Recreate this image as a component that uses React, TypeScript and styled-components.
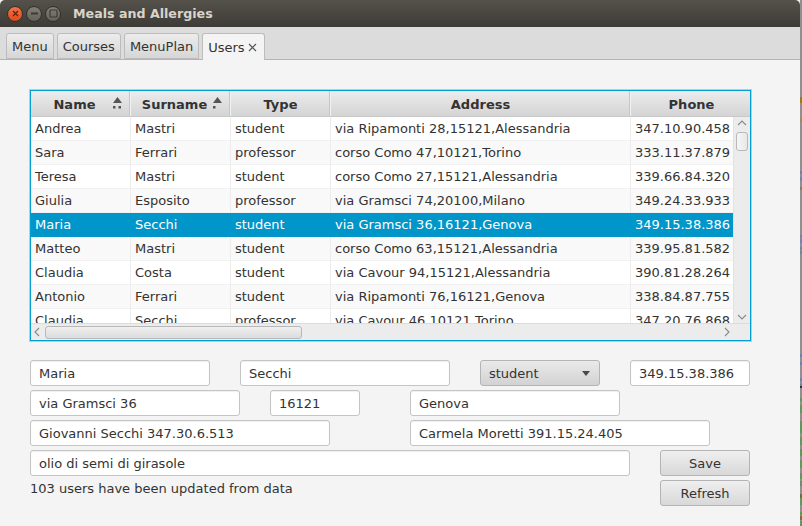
import React from 'react'
import styled, { createGlobalStyle } from 'styled-components'

const GlobalStyle = createGlobalStyle`
  html, body {
    margin: 0;
    padding: 0;
    background: #8f8f8f;
  }
  * {
    box-sizing: border-box;
  }
`

const Desktop = styled.div`
  width: 802px;
  height: 526px;
  display: flex;
  overflow: hidden;
`

const Window = styled.div`
  flex: none;
  width: 800px;
  height: 526px;
  overflow: hidden;
  background: #f4f4f4;
  font-family: 'DejaVu Sans', sans-serif;
  font-size: 13px;
  color: #333;
`

const EdgeStrip = styled.svg`
  flex: none;
  display: block;
`

const TitleBar = styled.div`
  height: 27px;
  display: flex;
  align-items: center;
  padding-left: 7px;
  background: linear-gradient(#55524b, #3d3b36);
  border-radius: 5px 5px 0 0;
`

const WinButtons = styled.div`
  display: flex;
  gap: 3px;
`

const WinButton = styled.div<{ $kind: 'close' | 'other' }>`
  width: 16px;
  height: 16px;
  border-radius: 50%;
  display: flex;
  align-items: center;
  justify-content: center;
  border: 1px solid #33312c;
  background: ${p => (p.$kind === 'close' ? 'linear-gradient(#f0734a, #dd4a1c)' : 'linear-gradient(#817e76, #65625b)')};
`

const Title = styled.div`
  margin-left: 12px;
  font-weight: bold;
  font-size: 12.65px;
  color: #d8d4ca;
`

const TabBar = styled.div`
  height: 33px;
  display: flex;
  align-items: flex-end;
  gap: 3px;
  padding-left: 6px;
  background: #dcdcdc;
  border-bottom: 1px solid #b4b4b4;
`

const Tab = styled.div<{ $active?: boolean }>`
  height: ${p => (p.$active ? '27px' : '26px')};
  margin-bottom: ${p => (p.$active ? '-1px' : '0')};
  display: flex;
  align-items: center;
  gap: 3px;
  padding: ${p => (p.$active ? '0 7px 0 5px' : '0 5px')};
  border: 1px solid #bcbcbc;
  border-bottom: ${p => (p.$active ? 'none' : '1px solid #bcbcbc')};
  border-radius: 3px 3px 0 0;
  background: ${p => (p.$active ? '#f4f4f4' : 'linear-gradient(#ececec, #d6d6d6)')};
`

const Content = styled.div`
  padding: 30px 0 0 30px;
`

const TableFrame = styled.div`
  width: 721px;
  height: 251px;
  border: 1px solid #039ed3;
  box-shadow: 0 0 0 1px rgba(3, 158, 211, 0.35), inset 0 0 0 0.5px #39b3dd;
  background: #fff;
  display: flex;
  flex-direction: column;
  overflow: hidden;
`

const HeaderRow = styled.div`
  flex: none;
  height: 26px;
  display: flex;
  background: linear-gradient(#ececec, #d4d4d4);
  border-bottom: 1px solid #c8c8c8;
`

const HeaderCell = styled.div<{ $w: number; $shift: number }>`
  flex: none;
  position: relative;
  width: ${p => p.$w}px;
  padding: 2px ${p => p.$shift}px 0 0;
  display: flex;
  align-items: center;
  justify-content: center;
  font-weight: bold;
  color: #333;
  border-right: 1px solid #f2f2f2;
  box-shadow: inset -1px 0 0 #c6c6c6;
`

const SortMark = styled.svg`
  position: absolute;
  top: 5px;
  left: 81px;
`

const BodyArea = styled.div`
  flex: 1;
  min-height: 0;
  display: flex;
`

const Rows = styled.div`
  flex: 1;
  min-width: 0;
  overflow: hidden;
`

const Row = styled.div<{ $odd: boolean; $selected: boolean }>`
  height: 24px;
  display: flex;
  align-items: center;
  background: ${p => (p.$selected ? '#0096c9' : p.$odd ? '#f9f9f9' : '#fff')};
  color: ${p => (p.$selected ? '#fff' : '#333')};
  border-bottom: 1px solid ${p => (p.$selected ? '#0096c9' : '#f1f1f1')};
`

const Cell = styled.div<{ $w: number; $selected: boolean }>`
  flex: none;
  width: ${p => p.$w}px;
  height: 24px;
  line-height: 23px;
  padding-left: 4px;
  white-space: nowrap;
  overflow: hidden;
  border-right: 1px solid ${p => (p.$selected ? '#0096c9' : '#ececec')};
`

const VScroll = styled.div`
  flex: none;
  width: 17px;
  background: #ececec;
  border-left: 1px solid #e2e2e2;
  display: flex;
  flex-direction: column;
  align-items: center;
`

const VThumb = styled.div`
  width: 12px;
  height: 19px;
  margin-top: 6px;
  border: 1px solid #b8b8b8;
  border-radius: 3px;
  background: linear-gradient(90deg, #f6f6f6, #e8e8e8);
`

const Arrow = styled.svg`
  flex: none;
  display: block;
`

const VArrowTop = styled(Arrow)`
  margin-top: 3px;
`

const VArrowBottom = styled(Arrow)`
  margin-top: auto;
  margin-bottom: 3px;
`

const HScroll = styled.div`
  flex: none;
  height: 17px;
  display: flex;
  align-items: center;
  background: #ececec;
  border-top: 1px solid #dcdcdc;
  padding: 0 20px 0 3px;
`

const HThumb = styled.div`
  width: 257px;
  height: 13px;
  margin-left: 5px;
  border: 1px solid #b8b8b8;
  border-radius: 3px;
  background: linear-gradient(#f0f0f0, #dcdcdc);
`

const HArrowRight = styled(Arrow)`
  margin-left: auto;
`

const Form = styled.div`
  margin-top: 19px;
  display: flex;
  flex-direction: column;
  gap: 4px;
`

const FormRow = styled.div`
  height: 26px;
  display: flex;
  align-items: flex-start;
`

const Field = styled.div<{ $w: number; $gap?: number }>`
  flex: none;
  width: ${p => p.$w}px;
  height: 26px;
  margin-left: ${p => p.$gap ?? 0}px;
  padding-left: 8px;
  line-height: 25px;
  white-space: nowrap;
  background: #fff;
  border: 1px solid #c4c4c4;
  border-radius: 3px;
  box-shadow: inset 0 1px 1px #f0f0f0;
`

const Combo = styled.div<{ $gap: number }>`
  flex: none;
  width: 120px;
  height: 26px;
  margin-left: ${p => p.$gap}px;
  padding: 0 9px 0 8px;
  display: flex;
  align-items: center;
  justify-content: space-between;
  border: 1px solid #b4b4b4;
  border-radius: 3px;
  background: linear-gradient(#eaeaea, #d2d2d2);
`

const ComboArrow = styled.div`
  width: 0;
  height: 0;
  border-left: 4px solid transparent;
  border-right: 4px solid transparent;
  border-top: 5px solid #4a4a4a;
`

const Button = styled.div<{ $gap: number }>`
  flex: none;
  width: 90px;
  height: 26px;
  margin-left: ${p => p.$gap}px;
  display: flex;
  align-items: center;
  justify-content: center;
  border: 1px solid #b4b4b4;
  border-radius: 3px;
  background: linear-gradient(#efefef, #d8d8d8);
`

const Status = styled.div`
  flex: none;
  width: 630px;
  line-height: 17px;
`

const columns = [
  { key: 'name', title: 'Name', width: 100, headWidth: 100, shift: 12 },
  { key: 'surname', title: 'Surname', width: 100, headWidth: 100, shift: 12 },
  { key: 'type', title: 'Type', width: 100, headWidth: 100, shift: 0 },
  { key: 'address', title: 'Address', width: 300, headWidth: 300, shift: 0 },
  { key: 'phone', title: 'Phone', width: 119, headWidth: 122, shift: 0 },
] as const

const users = [
  ['Andrea', 'Mastri', 'student', 'via Ripamonti 28,15121,Alessandria', '347.10.90.458'],
  ['Sara', 'Ferrari', 'professor', 'corso Como 47,10121,Torino', '333.11.37.879'],
  ['Teresa', 'Mastri', 'student', 'corso Como 27,15121,Alessandria', '339.66.84.320'],
  ['Giulia', 'Esposito', 'professor', 'via Gramsci 74,20100,Milano', '349.24.33.933'],
  ['Maria', 'Secchi', 'student', 'via Gramsci 36,16121,Genova', '349.15.38.386'],
  ['Matteo', 'Mastri', 'student', 'corso Como 63,15121,Alessandria', '339.95.81.582'],
  ['Claudia', 'Costa', 'student', 'via Cavour 94,15121,Alessandria', '390.81.28.264'],
  ['Antonio', 'Ferrari', 'student', 'via Ripamonti 76,16121,Genova', '338.84.87.755'],
  ['Claudia', 'Secchi', 'professor', 'via Cavour 46,10121,Torino', '347.20.76.868'],
]

const SELECTED = 4

// bits of the desktop showing past the window's right edge: [y, height, colour]
const edgeMarks: [number, number, string][] = [
  [97, 6, '#a07a10'],
  [119, 3, '#b08a20'],
  [171, 3, '#6a85b0'],
  [177, 4, '#6a85b0'],
  [187, 3, '#85805a'],
  [235, 3, '#6a85b0'],
  [239, 4, '#6a85b0'],
  [247, 3, '#6a85b0'],
  [251, 3, '#6a85b0'],
  [354, 3, '#6a85b0'],
  [362, 3, '#6a85b0'],
  [378, 3, '#6a85b0'],
  [384, 3, '#6a85b0'],
  [386, 2, '#333333'],
  [398, 3, '#5a9a5a'],
  [405, 8, '#5a9a5a'],
  [421, 12, '#5a9a5a'],
  [437, 8, '#5a9a5a'],
  [449, 7, '#5a9a5a'],
  [460, 8, '#5a9a5a'],
  [473, 6, '#5a9a5a'],
  [481, 5, '#5a9a5a'],
  [494, 4, '#7a6a40'],
  [498, 7, '#5a9a5a'],
  [512, 3, '#5a9a5a'],
  [516, 4, '#8a6a30'],
  [521, 5, '#5a9a5a'],
]

const Triangle = ({ dots }: { dots: number }) => (
  <SortMark width="11" height="13" viewBox="0 0 11 13">
    <path d="M5.5 1 L10 7 H1 Z" fill="#555" />
    <rect x="1" y="10" width="2.5" height="2.5" fill="#555" />
    {dots === 2 && <rect x="6.5" y="10" width="2.5" height="2.5" fill="#555" />}
  </SortMark>
)

const App = () => {
  return (
    <Desktop>
      <GlobalStyle />
      <Window>
        <TitleBar>
          <WinButtons>
            <WinButton $kind="close">
              <svg width="7" height="7" viewBox="0 0 7 7">
                <path d="M1 1 L6 6 M6 1 L1 6" stroke="#6b1f08" strokeWidth="1.3" />
              </svg>
            </WinButton>
            <WinButton $kind="other">
              <svg width="9" height="3" viewBox="0 0 9 3">
                <rect x="1" y="0.5" width="7" height="2" fill="#3c3a35" />
              </svg>
            </WinButton>
            <WinButton $kind="other">
              <svg width="9" height="9" viewBox="0 0 9 9">
                <rect x="1" y="1" width="7" height="7" rx="1" fill="none" stroke="#3c3a35" strokeWidth="1.2" />
              </svg>
            </WinButton>
          </WinButtons>
          <Title>Meals and Allergies</Title>
        </TitleBar>

        <TabBar>
          <Tab>Menu</Tab>
          <Tab>Courses</Tab>
          <Tab>MenuPlan</Tab>
          <Tab $active>
            Users
            <svg width="9" height="9" viewBox="0 0 9 9">
              <path d="M1 1 L8 8 M8 1 L1 8" stroke="#555" strokeWidth="1.2" />
            </svg>
          </Tab>
        </TabBar>

        <Content>
          <TableFrame>
            <HeaderRow>
              {columns.map(c => (
                <HeaderCell key={c.key} $w={c.headWidth} $shift={c.shift}>
                  {c.title}
                  {c.key === 'name' && <Triangle dots={2} />}
                  {c.key === 'surname' && <Triangle dots={1} />}
                </HeaderCell>
              ))}
            </HeaderRow>
            <BodyArea>
              <Rows>
                {users.map((u, i) => (
                  <Row key={i} $odd={i % 2 === 1} $selected={i === SELECTED}>
                    {columns.map((c, j) => (
                      <Cell key={c.key} $w={c.width} $selected={i === SELECTED}>
                        {u[j]}
                      </Cell>
                    ))}
                  </Row>
                ))}
              </Rows>
              <VScroll>
                <VArrowTop width="10" height="6" viewBox="0 0 10 6">
                  <path d="M1 5 L5 1 L9 5" fill="none" stroke="#8a8a8a" strokeWidth="1.1" />
                </VArrowTop>
                <VThumb />
                <VArrowBottom width="10" height="6" viewBox="0 0 10 6">
                  <path d="M1 1 L5 5 L9 1" fill="none" stroke="#8a8a8a" strokeWidth="1.1" />
                </VArrowBottom>
              </VScroll>
            </BodyArea>
            <HScroll>
              <Arrow width="6" height="10" viewBox="0 0 6 10">
                <path d="M5 1 L1 5 L5 9" fill="none" stroke="#8a8a8a" strokeWidth="1.1" />
              </Arrow>
              <HThumb />
              <HArrowRight width="6" height="10" viewBox="0 0 6 10">
                <path d="M1 1 L5 5 L1 9" fill="none" stroke="#8a8a8a" strokeWidth="1.1" />
              </HArrowRight>
            </HScroll>
          </TableFrame>

          <Form>
            <FormRow>
              <Field $w={180}>Maria</Field>
              <Field $w={210} $gap={30}>Secchi</Field>
              <Combo $gap={30}>
                student
                <ComboArrow />
              </Combo>
              <Field $w={120} $gap={30}>349.15.38.386</Field>
            </FormRow>
            <FormRow>
              <Field $w={210}>via Gramsci 36</Field>
              <Field $w={90} $gap={30}>16121</Field>
              <Field $w={210} $gap={50}>Genova</Field>
            </FormRow>
            <FormRow>
              <Field $w={300}>Giovanni Secchi 347.30.6.513</Field>
              <Field $w={300} $gap={80}>Carmela Moretti 391.15.24.405</Field>
            </FormRow>
            <FormRow>
              <Field $w={600}>olio di semi di girasole</Field>
              <Button $gap={30}>Save</Button>
            </FormRow>
            <FormRow>
              <Status>103 users have been updated from data</Status>
              <Button $gap={0}>Refresh</Button>
            </FormRow>
          </Form>
        </Content>
      </Window>
      <EdgeStrip width="2" height="526" viewBox="0 0 2 526">
        {edgeMarks.map(([y, h, colour]) => (
          <rect key={y} x="0" y={y} width="2" height={h} fill={colour} />
        ))}
      </EdgeStrip>
    </Desktop>
  )
}

export default App
